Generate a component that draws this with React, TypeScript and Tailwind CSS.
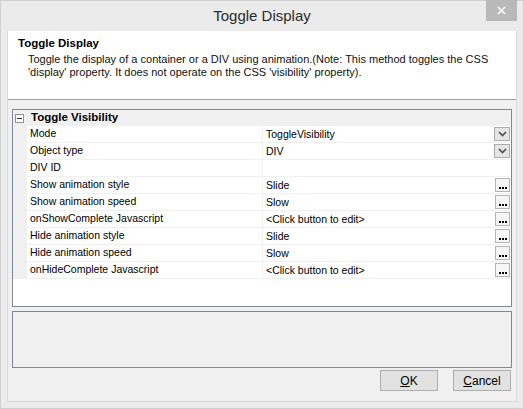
const rows: { name: string; value: string; kind: "drop" | "dots" | "none" }[] = [
  { name: "Mode", value: "ToggleVisibility", kind: "drop" },
  { name: "Object type", value: "DIV", kind: "drop" },
  { name: "DIV ID", value: "", kind: "none" },
  { name: "Show animation style", value: "Slide", kind: "dots" },
  { name: "Show animation speed", value: "Slow", kind: "dots" },
  { name: "onShowComplete Javascript", value: "<Click button to edit>", kind: "dots" },
  { name: "Hide animation style", value: "Slide", kind: "dots" },
  { name: "Hide animation speed", value: "Slow", kind: "dots" },
  { name: "onHideComplete Javascript", value: "<Click button to edit>", kind: "dots" },
];

function DropButton() {
  return (
    <div className="mt-[1px] mr-[1px] flex h-[14px] w-[16px] items-center justify-center border border-[#acacac] bg-[#e5e5e5]">
      <svg width="9" height="6" viewBox="0 0 9 6">
        <path d="M1 1l3.5 3.5L8 1" fill="none" stroke="#505050" strokeWidth="1.7" />
      </svg>
    </div>
  );
}

function DotsButton() {
  return (
    <div className="mt-[1px] mr-[1px] flex h-[14px] w-[15px] items-end justify-center gap-[1px] border border-[#b4b4b4] bg-[#f6f6f6] pb-[2px]">
      <span className="h-[2px] w-[2px] bg-black" />
      <span className="h-[2px] w-[2px] bg-black" />
      <span className="h-[2px] w-[2px] bg-black" />
    </div>
  );
}

export default function App() {
  return (
    <div
      className="flex h-[409px] w-[524px] flex-col border border-[#cfcfcf] bg-[#ebebeb] text-black"
      style={{ fontFamily: '"Liberation Sans", Arial, sans-serif' }}
    >
      {/* title bar */}
      <div className="relative flex h-[30px] items-center justify-center">
        <span className="text-[15px] text-[#2b2b2b]">Toggle Display</span>
        <div className="absolute right-[6px] top-[-1px] flex h-[21px] w-[31px] items-center justify-center bg-[#b9b9b9]">
          <svg width="9" height="9" viewBox="0 0 9 9">
            <path d="M1 1l7 7M8 1l-7 7" stroke="#fff" strokeWidth="1.6" />
          </svg>
        </div>
      </div>

      {/* client area */}
      <div className="ml-[6px] flex h-[371px] w-[510px] flex-col border-x border-b border-[#d9d9d9] bg-[#f0f0f0]">
        <div className="h-[69px] border-b border-[#a0a0a0] bg-white pl-[10px] pt-[5px]">
          <div className="text-[11.5px] font-bold leading-[14px]">Toggle Display</div>
          <div className="mt-[3px] whitespace-nowrap pl-[10px] text-[11px] leading-[13px] text-[#111]">
            <div>Toggle the display of a container or a DIV using animation.(Note: This method toggles the CSS</div>
            <div>'display' property. It does not operate on the CSS 'visibility' property).</div>
          </div>
        </div>

        <div className="flex flex-col px-[4px] pt-[9px]">
          {/* property grid */}
          <div className="flex h-[198px] flex-col border border-[#828790] bg-white">
            <div className="flex h-[16px] items-center bg-[#f0f0f0]">
              <div className="ml-[2px] flex h-[9px] w-[9px] items-center justify-center border border-[#919191] bg-white">
                <span className="h-[1px] w-[5px] bg-[#333]" />
              </div>
              <span className="ml-[7px] text-[11.5px] font-bold">Toggle Visibility</span>
            </div>
            {rows.map((r) => (
              <div key={r.name} className="flex h-[17px]">
                <div className="w-[14px] bg-[#f0f0f0]" />
                <div className="flex w-[236px] items-center border-b border-r border-[#f0f0f0] pl-[3px] text-[10.5px]">
                  {r.name}
                </div>
                <div className="flex flex-1 items-start justify-between border-b border-[#f0f0f0]">
                  <span className="pl-[3px] pt-[2px] text-[10.5px] leading-[13px]">{r.value}</span>
                  {r.kind === "drop" && <DropButton />}
                  {r.kind === "dots" && <DotsButton />}
                </div>
              </div>
            ))}
          </div>

          {/* description box */}
          <div className="mt-[4px] h-[57px] border border-[#828790] bg-[#f0f0f0]" />

          <div className="mt-[2px] flex justify-end gap-[15px] pr-[1px]">
            <button className="flex h-[21px] w-[58px] items-center justify-center border border-[#adadad] bg-[#e1e1e1] text-[12px]">
              <span>
                <u>O</u>K
              </span>
            </button>
            <button className="flex h-[21px] w-[58px] items-center justify-center border border-[#adadad] bg-[#e1e1e1] text-[12px]">
              <span>
                <u>C</u>ancel
              </span>
            </button>
          </div>
        </div>
      </div>
    </div>
  );
}
